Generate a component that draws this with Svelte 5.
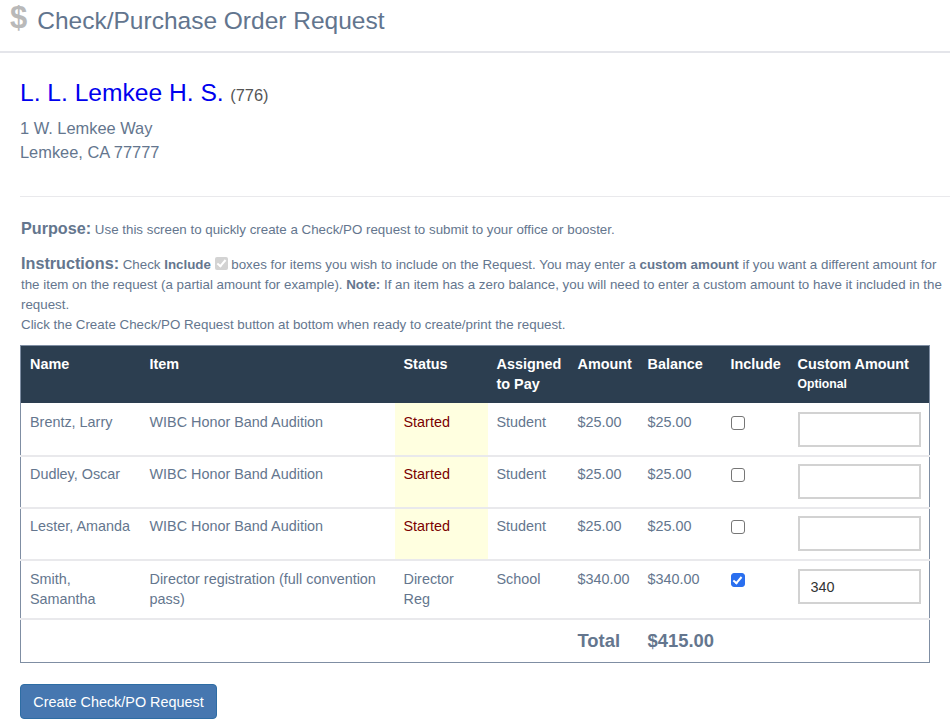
<script>
  const rows = [
    { name: 'Brentz, Larry', item: 'WIBC Honor Band Audition', status: 'Started', pay: 'Student', amount: '$25.00', balance: '$25.00', on: false, custom: '' },
    { name: 'Dudley, Oscar', item: 'WIBC Honor Band Audition', status: 'Started', pay: 'Student', amount: '$25.00', balance: '$25.00', on: false, custom: '' },
    { name: 'Lester, Amanda', item: 'WIBC Honor Band Audition', status: 'Started', pay: 'Student', amount: '$25.00', balance: '$25.00', on: false, custom: '' },
    { name: 'Smith, Samantha', item: 'Director registration (full convention pass)', status: 'Director Reg', pay: 'School', amount: '$340.00', balance: '$340.00', on: true, custom: '340' }
  ];
</script>

<header class="top">
  <span class="dollar">$</span>
  <h1>Check/Purchase Order Request</h1>
</header>

<main class="page">
  <section class="school">
    <h2><span class="sname">L. L. Lemkee H. S.</span> <span class="code">(776)</span></h2>
    <p>1 W. Lemkee Way<br />Lemkee, CA 77777</p>
  </section>

  <hr />

  <p class="purpose"><strong class="lead">Purpose:</strong> Use this screen to quickly create a Check/PO request to submit to your office or booster.</p>

  <p class="instr">
    <strong class="lead">Instructions:</strong> Check <strong>Include</strong>
    <input class="mini" type="checkbox" checked disabled />
    boxes for items you wish to include on the Request. You may enter a <strong>custom amount</strong> if you want a different amount for the item on the request (a partial amount for example). <strong>Note:</strong> If an item has a zero balance, you will need to enter a custom amount to have it included in the request.<br />
    Click the Create Check/PO Request button at bottom when ready to create/print the request.
  </p>

  <table>
    <colgroup>
      <col class="c1" /><col class="c2" /><col class="c3" /><col class="c4" /><col class="c5" /><col class="c6" /><col class="c7" /><col class="c8" />
    </colgroup>
    <thead>
      <tr>
        <th>Name</th><th>Item</th><th>Status</th><th>Assigned to Pay</th><th>Amount</th><th>Balance</th><th>Include</th>
        <th>Custom Amount<small>Optional</small></th>
      </tr>
    </thead>
    <tbody>
      {#each rows as r}
        <tr>
          <td>{r.name}</td>
          <td>{r.item}</td>
          <td class:started={r.status === 'Started'}>{r.status}</td>
          <td>{r.pay}</td>
          <td>{r.amount}</td>
          <td>{r.balance}</td>
          <td><input class="check" type="checkbox" checked={r.on} /></td>
          <td><input class="amt" type="text" value={r.custom} /></td>
        </tr>
      {/each}
      <tr class="total">
        <td colspan="4"></td>
        <td>Total</td>
        <td colspan="3">$415.00</td>
      </tr>
    </tbody>
  </table>

  <button type="button" class="create">Create Check/PO Request</button>
</main>

<style>
  :global(body) {
    margin: 0;
    background: #fff;
    font-family: "Liberation Sans", Arial, sans-serif;
    color: #64768e;
    font-size: 13.33px;
  }
  .top {
    display: flex;
    align-items: flex-start;
    height: 51px;
    padding-left: 10px;
    gap: 10px;
    border-bottom: 2px solid #e4e5ea;
  }
  .dollar {
    font-size: 31px;
    line-height: 36px;
    color: #b9b9b9;
    font-weight: 700;
  }
  h1 {
    margin: 5px 0 0;
    font-size: 24.5px;
    line-height: 32px;
    font-weight: 400;
    color: #62758e;
  }
  .page {
    padding: 0 20px;
  }
  .school {
    padding-top: 24px;
  }
  h2 {
    margin: 0;
    font-weight: 400;
    line-height: 32px;
  }
  .sname {
    font-size: 24.6px;
    color: #0000ee;
  }
  .code {
    font-size: 16.4px;
    color: #555;
    margin-left: 1px;
  }
  .school p {
    margin: 5px 0 0;
    font-size: 16.4px;
    line-height: 24px;
  }
  hr {
    margin: 32px -20px 0 0;
    border: 0;
    border-top: 1px solid #e9e9ec;
  }
  .purpose {
    margin: 20px -12px 0 1px;
    line-height: 22px;
  }
  .instr {
    margin: 12px -12px 0 1px;
    line-height: 20px;
  }
  .lead {
    font-size: 16.2px;
  }
  .mini {
    appearance: none;
    position: relative;
    width: 13px;
    height: 13px;
    margin: 0;
    vertical-align: -1px;
    background: #d3d3d3;
    border-radius: 2px;
  }
  .mini::after {
    content: "";
    position: absolute;
    left: 4px;
    top: 1px;
    width: 3px;
    height: 7px;
    border: solid #fff;
    border-width: 0 2px 2px 0;
    transform: rotate(40deg);
  }
  table {
    margin-top: 10px;
    width: 910px;
    table-layout: fixed;
    border-collapse: collapse;
    border: 1px solid #7f8ea3;
    font-size: 14.4px;
  }
  .c1 { width: 120px; }
  .c2 { width: 254px; }
  .c3 { width: 93px; }
  .c4 { width: 81px; }
  .c5 { width: 70px; }
  .c6 { width: 83px; }
  .c7 { width: 67px; }
  thead tr {
    background: #2c3e50;
  }
  th {
    color: #fff;
    text-align: left;
    vertical-align: top;
    font-size: 14.4px;
    line-height: 20px;
    padding: 8px 9px 9px;
  }
  small {
    display: block;
    font-size: 12.2px;
    line-height: 20px;
  }
  td {
    vertical-align: top;
    padding: 7px 9px 8px;
    line-height: 20px;
    border-top: 2px solid #e9e9ec;
  }
  tbody tr:first-child td {
    border-top: 0;
    padding: 9px 9px 8px;
  }
  tbody tr:nth-child(4) td {
    padding: 8px 9px 9px;
  }
  .started {
    background: #ffffe0;
    color: #7a0000;
  }
  .check {
    appearance: none;
    position: relative;
    box-sizing: border-box;
    display: block;
    width: 14px;
    height: 14px;
    margin: 4px 0 0;
    background: #fff;
    border: 1px solid #767676;
    border-radius: 3px;
  }
  .check:checked {
    background: #2a6fef;
    border-color: #2a6fef;
  }
  .check:checked::after {
    content: "";
    position: absolute;
    left: 3.5px;
    top: 0.5px;
    width: 3px;
    height: 7px;
    border: solid #fff;
    border-width: 0 2px 2px 0;
    transform: rotate(40deg);
  }
  .amt {
    display: block;
    box-sizing: border-box;
    width: 123px;
    height: 35px;
    border: 2px solid #d2d2d2;
    padding: 0 11px;
    font: 14.4px "Liberation Sans", Arial, sans-serif;
    color: #333;
    outline: none;
  }
  .total td {
    padding: 9px;
    font-size: 18.4px;
    font-weight: 700;
    line-height: 24px;
  }
  .create {
    display: block;
    margin-top: 21px;
    width: 197px;
    height: 35px;
    padding: 0;
    border: 1px solid #2e6da4;
    border-radius: 4px;
    background: #4677b0;
    color: #fff;
    font: 14.4px "Liberation Sans", Arial, sans-serif;
  }
</style>
